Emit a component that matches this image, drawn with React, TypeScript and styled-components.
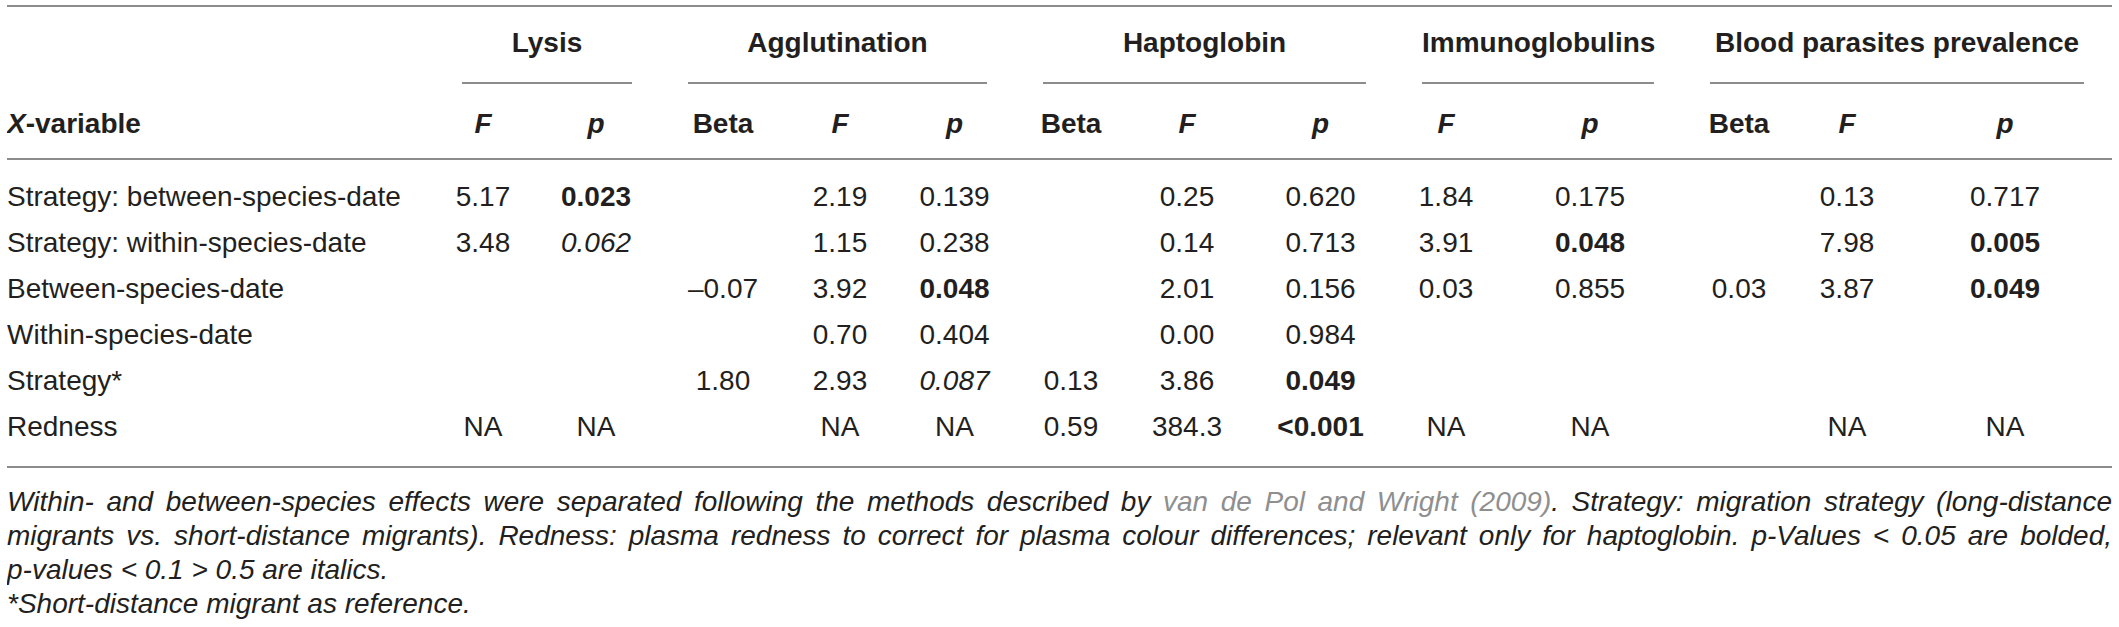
import React from 'react';
import styled, { createGlobalStyle } from 'styled-components';

const GlobalStyle = createGlobalStyle`
  body {
    margin: 5px 7px 0;
    background: #ffffff;
    color: #231f20;
    font-family: "Liberation Sans", Arial, sans-serif;
  }
`;

const Wrapper = styled.div`
  width: 2105px;
`;

const Table = styled.table`
  width: 100%;
  border-collapse: collapse;
  table-layout: fixed;
  border-top: 2px solid #8c8c8c;
  border-bottom: 2px solid #8c8c8c;
  font-size: 28px;
`;

const GroupCell = styled.th`
  padding: 21px 28px 0;
  font-weight: 700;
  text-align: center;
`;

const GroupLabel = styled.span`
  display: block;
  line-height: 30px;
  padding-bottom: 24px;
  border-bottom: 2px solid #8c8c8c;
  white-space: nowrap;
`;

const SubCell = styled.th<{ $left?: boolean; $italic?: boolean }>`
  padding: 25px ${(p) => (p.$left ? '0' : '4px')} 19px;
  line-height: 30px;
  font-weight: 700;
  font-style: ${(p) => (p.$italic ? 'italic' : 'normal')};
  text-align: ${(p) => (p.$left ? 'left' : 'center')};
  border-bottom: 2px solid #8c8c8c;
`;

const Row = styled.tr`
  &:first-child td {
    padding-top: 22px;
  }
  &:last-child td {
    padding-bottom: 24px;
  }
`;

const Cell = styled.td<{ $left?: boolean; $bold?: boolean; $italic?: boolean }>`
  padding: 8px 0;
  line-height: 30px;
  white-space: nowrap;
  overflow: hidden;
  text-align: ${(p) => (p.$left ? 'left' : 'center')};
  font-weight: ${(p) => (p.$bold ? 700 : 400)};
  font-style: ${(p) => (p.$italic ? 'italic' : 'normal')};
`;

const Notes = styled.div`
  margin-top: 17px;
  font-size: 28px;
  line-height: 34px;
  font-style: italic;
`;

const Note = styled.p`
  margin: 0;
  text-align: justify;
`;

const Ref = styled.span`
  color: #8f8f8f;
`;

const NoBreak = styled.span`
  white-space: nowrap;
`;

type Value = string | { v: string; s: 'b' | 'i' };

const widths = [427, 98, 128, 126, 108, 121, 112, 120, 147, 104, 184, 114, 102, 214];

const groups = [
  { label: 'Lysis', span: 2 },
  { label: 'Agglutination', span: 3 },
  { label: 'Haptoglobin', span: 3 },
  { label: 'Immunoglobulins', span: 2 },
  { label: 'Blood parasites prevalence', span: 3 },
];

const subHeads = ['F', 'p', 'Beta', 'F', 'p', 'Beta', 'F', 'p', 'F', 'p', 'Beta', 'F', 'p'];

const b = (v: string): Value => ({ v, s: 'b' });
const i = (v: string): Value => ({ v, s: 'i' });

const rows: Value[][] = [
  ['Strategy: between-species-date', '5.17', b('0.023'), '', '2.19', '0.139', '', '0.25', '0.620', '1.84', '0.175', '', '0.13', '0.717'],
  ['Strategy: within-species-date', '3.48', i('0.062'), '', '1.15', '0.238', '', '0.14', '0.713', '3.91', b('0.048'), '', '7.98', b('0.005')],
  ['Between-species-date', '', '', '–0.07', '3.92', b('0.048'), '', '2.01', '0.156', '0.03', '0.855', '0.03', '3.87', b('0.049')],
  ['Within-species-date', '', '', '', '0.70', '0.404', '', '0.00', '0.984', '', '', '', '', ''],
  ['Strategy*', '', '', '1.80', '2.93', i('0.087'), '0.13', '3.86', b('0.049'), '', '', '', '', ''],
  ['Redness', 'NA', 'NA', '', 'NA', 'NA', '0.59', '384.3', b('<0.001'), 'NA', 'NA', '', 'NA', 'NA'],
];

const App: React.FC = () => {
  return (
    <Wrapper>
      <GlobalStyle />
      <Table>
        <colgroup>
          {widths.map((w, idx) => (
            <col key={idx} style={{ width: w }} />
          ))}
        </colgroup>
        <thead>
          <tr>
            <th />
            {groups.map((g) => (
              <GroupCell key={g.label} colSpan={g.span}>
                <GroupLabel>{g.label}</GroupLabel>
              </GroupCell>
            ))}
          </tr>
          <tr>
            <SubCell $left>
              <i>X</i>-variable
            </SubCell>
            {subHeads.map((h, idx) => (
              <SubCell key={idx} $italic={h !== 'Beta'}>
                {h}
              </SubCell>
            ))}
          </tr>
        </thead>
        <tbody>
          {rows.map((r, ri) => (
            <Row key={ri}>
              {r.map((c, ci) =>
                typeof c === 'string' ? (
                  <Cell key={ci} $left={ci === 0}>{c}</Cell>
                ) : (
                  <Cell key={ci} $bold={c.s === 'b'} $italic={c.s === 'i'}>
                    {c.v}
                  </Cell>
                )
              )}
            </Row>
          ))}
        </tbody>
      </Table>
      <Notes>
        <Note>
          Within- and between-species effects were separated following the methods described by{' '}
          <Ref>van de Pol and Wright (2009)</Ref>. Strategy: migration strategy (long-distance migrants vs.
          short-distance migrants). Redness: plasma redness to correct for plasma colour differences; relevant
          only for haptoglobin. <NoBreak>p-Values</NoBreak> &lt; 0.05 are bolded, <NoBreak>p-values</NoBreak>{' '}
          &lt; 0.1 &gt; 0.5 are italics.
        </Note>
        <Note>*Short-distance migrant as reference.</Note>
      </Notes>
    </Wrapper>
  );
};

export default App;
